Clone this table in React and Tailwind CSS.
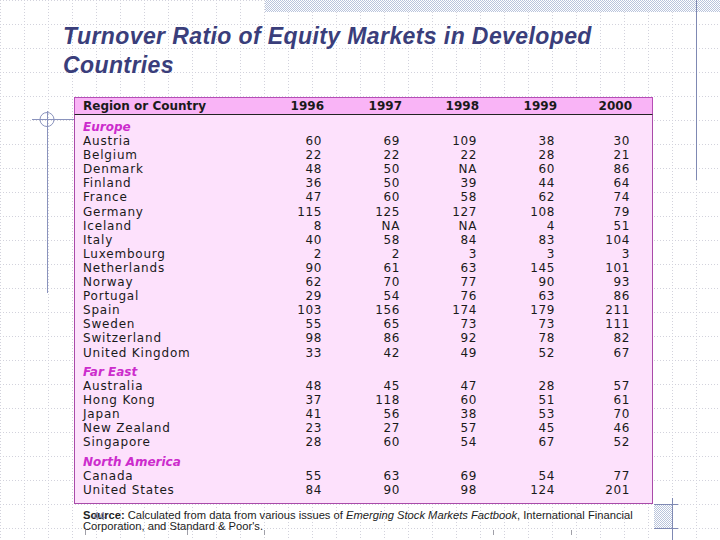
import React from "react";

const europe = [
  ["Austria", "60", "69", "109", "38", "30"],
  ["Belgium", "22", "22", "22", "28", "21"],
  ["Denmark", "48", "50", "NA", "60", "86"],
  ["Finland", "36", "50", "39", "44", "64"],
  ["France", "47", "60", "58", "62", "74"],
  ["Germany", "115", "125", "127", "108", "79"],
  ["Iceland", "8", "NA", "NA", "4", "51"],
  ["Italy", "40", "58", "84", "83", "104"],
  ["Luxembourg", "2", "2", "3", "3", "3"],
  ["Netherlands", "90", "61", "63", "145", "101"],
  ["Norway", "62", "70", "77", "90", "93"],
  ["Portugal", "29", "54", "76", "63", "86"],
  ["Spain", "103", "156", "174", "179", "211"],
  ["Sweden", "55", "65", "73", "73", "111"],
  ["Switzerland", "98", "86", "92", "78", "82"],
  ["United Kingdom", "33", "42", "49", "52", "67"],
];

const farEast = [
  ["Australia", "48", "45", "47", "28", "57"],
  ["Hong Kong", "37", "118", "60", "51", "61"],
  ["Japan", "41", "56", "38", "53", "70"],
  ["New Zealand", "23", "27", "57", "45", "46"],
  ["Singapore", "28", "60", "54", "67", "52"],
];

const northAmerica = [
  ["Canada", "55", "63", "69", "54", "77"],
  ["United States", "84", "90", "98", "124", "201"],
];

function Row({ r }) {
  return (
    <div className="grid grid-cols-[208px_41px_78px_77px_78px_75px] leading-[14.1px]">
      <div className="pl-[8px] tracking-[0.8px]">{r[0]}</div>
      {r.slice(1).map((v, i) => (
        <div key={i} className="text-right pr-[2px] tracking-[0.6px]">
          {v}
        </div>
      ))}
    </div>
  );
}

function Group({ title, rows, extra }) {
  return (
    <div className={extra}>
      <div className="pl-[8px] leading-[14.1px] font-bold italic text-[#cc2ccc]">
        {title}
      </div>
      {rows.map((r) => (
        <Row key={r[0]} r={r} />
      ))}
    </div>
  );
}

function Decor() {
  const ticks = [85, 187, 264, 493, 571];
  return (
    <svg className="absolute inset-0 pointer-events-none" width="720" height="540" viewBox="0 0 720 540">
      <defs>
        <pattern id="grid" width="24" height="24" patternUnits="userSpaceOnUse">
          <line x1="0.5" y1="0" x2="0.5" y2="24" stroke="#d2d2dc" strokeWidth="1" strokeDasharray="1 2" />
          <line x1="0" y1="0.5" x2="24" y2="0.5" stroke="#d2d2dc" strokeWidth="1" strokeDasharray="1 2" />
        </pattern>
        <pattern id="check" width="2" height="2" patternUnits="userSpaceOnUse">
          <rect width="2" height="2" fill="#ffffff" />
          <rect x="0" y="0" width="1" height="1" fill="#b9c4dc" />
          <rect x="1" y="1" width="1" height="1" fill="#b9c4dc" />
        </pattern>
      </defs>
      <rect width="720" height="540" fill="url(#grid)" />
      <rect x="265" y="0" width="455" height="12" fill="url(#check)" />
      <line x1="696.5" y1="0" x2="696.5" y2="180" stroke="#7f89b3" strokeWidth="1" />
      <line x1="32" y1="119.5" x2="74" y2="119.5" stroke="#8a93bd" strokeWidth="1" />
      <line x1="47.5" y1="111" x2="47.5" y2="293" stroke="#8a93bd" strokeWidth="1" />
      <circle cx="47" cy="119.5" r="7" fill="none" stroke="#8a93bd" strokeWidth="1" />
      <rect x="654" y="504" width="18" height="24" fill="url(#check)" />
      <line x1="654" y1="504.5" x2="678" y2="504.5" stroke="#7f89b3" strokeWidth="1" />
      <line x1="654" y1="528.5" x2="678" y2="528.5" stroke="#7f89b3" strokeWidth="1" />
      <line x1="672.5" y1="498" x2="672.5" y2="540" stroke="#7f89b3" strokeWidth="1" />
      {ticks.map((x) => (
        <line key={x} x1={x + 0.5} y1="530" x2={x + 0.5} y2="535" stroke="#a0a0a8" strokeWidth="1" />
      ))}
    </svg>
  );
}

export default function App() {
  return (
    <div className="relative w-[720px] h-[540px] overflow-hidden bg-white">
      <Decor />
      <div className="relative pl-[63px] pt-[22px]">
        <h1 className="font-['Liberation_Sans',Arial,sans-serif] font-bold italic text-[23px] tracking-[0.4px] leading-[29px] text-[#3a3e7b]">
          Turnover Ratio of Equity Markets in Developed
          <br />
          Countries
        </h1>
      </div>
      <div className="relative ml-[74px] mt-[17px] w-[579px] font-['DejaVu_Sans',sans-serif] text-[12px] text-[#1a1a1a]">
        <div className="grid grid-cols-[208px_41px_78px_77px_78px_75px] h-[18px] items-center bg-[#f9b4f6] border border-[#b64eb6] border-b-[#222222] font-bold leading-[16px]">
          <div className="pl-[8px]">Region or Country</div>
          <div className="text-right">1996</div>
          <div className="text-right">1997</div>
          <div className="text-right">1998</div>
          <div className="text-right">1999</div>
          <div className="text-right">2000</div>
        </div>
        <div className="bg-[#fde1fc] border-x border-b border-[#a94aa9] pt-[5px] pb-[6px]">
          <Group title="Europe" rows={europe} />
          <Group title="Far East" rows={farEast} extra="pt-[5px]" />
          <Group title="North America" rows={northAmerica} extra="pt-[6px]" />
        </div>
      </div>
      <div className="relative ml-[83px] mt-[6px] font-['Liberation_Sans',Arial,sans-serif] text-[11.2px] leading-[11px] text-[#222222]">
        <div>
          <span className="font-bold">Source:</span> Calculated from data from various issues of{" "}
          <span className="italic">Emerging Stock Markets Factbook</span>, International Financial
        </div>
        <div>Corporation, and Standard &amp; Poor's.</div>
      </div>
      <div className="absolute left-[93px] top-[510px] font-['Liberation_Sans',Arial,sans-serif] text-[11px] leading-[12px] text-[#7b819e]">
        44
      </div>
    </div>
  );
}
